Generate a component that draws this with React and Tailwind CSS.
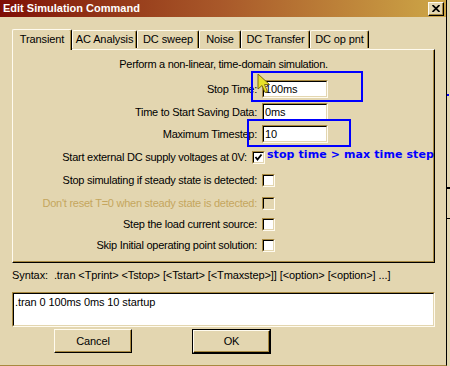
import React from "react";

const BG = "bg-[#e3d6b0]";

function Sunken({ className = "", inner = "bg-white", children }) {
  return (
    <div className={`border-t border-l border-t-[#a8893f] border-l-[#a8893f] border-b border-r border-b-[#fffbef] border-r-[#fffbef] ${className}`}>
      <div className={`w-full h-full border-t border-l border-t-black border-l-black border-b border-r border-b-[#e3d6b0] border-r-[#e3d6b0] ${inner}`}>
        {children}
      </div>
    </div>
  );
}

function Check({ checked, disabled }) {
  return (
    <Sunken className="w-[13px] h-[13px]" inner={disabled ? "bg-[#e3d6b0]" : "bg-white"}>
      {checked && (
        <svg width="9" height="9" viewBox="0 0 9 9" className="block">
          <path d="M1.5 4 L3.5 6.5 L7.5 1.5" stroke="black" strokeWidth="1.8" fill="none" />
        </svg>
      )}
    </Sunken>
  );
}

function Row({ label, className, children, disabled }) {
  return (
    <div className={`flex items-center ${className}`}>
      <div className={`w-[244px] text-right whitespace-nowrap leading-[13px] tracking-[-0.25px] ${disabled ? "text-[#c5a65e]" : "text-black"}`}>{label}</div>
      <div className="ml-[5px] flex items-center">{children}</div>
    </div>
  );
}

function Field({ value }) {
  return (
    <Sunken className="w-[66px] h-[18px]">
      <div className="pl-[1px] leading-[14px] text-[11px] text-black">{value}</div>
    </Sunken>
  );
}

function Tab({ label, className, selected }) {
  return (
    <div
      className={`flex items-center justify-center border-l border-t border-l-[#fffbef] border-t-[#fffbef] border-r border-r-black shadow-[inset_-1px_0_0_#a8893f] rounded-tl-[2px] rounded-tr-[2px] ${BG} ${selected ? "h-[21px] pb-[2px]" : "h-[18px] mb-[2px]"} ${className}`}
    >
      {label}
    </div>
  );
}

function Btn({ label, className }) {
  return (
    <div className={`flex items-center justify-center border-t border-l border-t-[#fffbef] border-l-[#fffbef] border-b border-r border-b-black border-r-black shadow-[inset_-1px_-1px_0_#a8893f] ${BG} ${className}`}>
      {label}
    </div>
  );
}

export default function App() {
  return (
    <div className={`w-[450px] h-[366px] flex overflow-hidden ${BG} font-['Liberation_Sans',Arial,sans-serif] text-[11px] tracking-[-0.1px] text-black`}>
      <div className="relative w-[447px] h-[366px] flex flex-col border-r border-r-black border-b border-b-[#a8893f]">
        {/* Title bar */}
        <div className="h-[17px] flex items-center justify-between bg-linear-to-r from-[#7e0c06] via-[#a9592a] to-[#cda747]">
          <span className="ml-[3px] text-white font-bold text-[11px] tracking-normal leading-[13px]">Edit Simulation Command</span>
          <div className={`mr-[2px] w-[16px] h-[14px] flex items-center justify-center border-t border-l border-t-[#fffbef] border-l-[#fffbef] border-b border-r border-b-black border-r-black shadow-[inset_-1px_-1px_0_#a8893f] ${BG}`}>
            <svg width="8" height="7" viewBox="0 0 8 7" className="block">
              <path d="M0.5 0 L7.5 7 M7.5 0 L0.5 7" stroke="black" strokeWidth="1.7" />
            </svg>
          </div>
        </div>

        {/* Tabs */}
        <div className="mt-[12px] h-[21px] flex items-end pl-[12px] relative z-10">
          <Tab label="Transient" selected className="w-[60px]" />
          <Tab label="AC Analysis" className="w-[65px]" />
          <Tab label="DC sweep" className="w-[62px]" />
          <Tab label="Noise" className="w-[42px]" />
          <Tab label="DC Transfer" className="w-[69px]" />
          <Tab label="DC op pnt" className="w-[59px]" />
        </div>

        {/* Panel */}
        <div className="-mt-[1px] ml-[12px] w-[423px] h-[214px] flex flex-col border-l border-t border-l-[#fffbef] border-t-[#fffbef] border-r border-b border-r-black border-b-black shadow-[inset_-1px_-1px_0_#a8893f]">
          <div className="mt-[7px] leading-[14px] text-center tracking-[-0.3px]">Perform a non-linear, time-domain simulation.</div>
          <Row label="Stop Time:" className="mt-[9px] h-[18px]"><Field value="100ms" /></Row>
          <Row label="Time to Start Saving Data:" className="mt-[5px] h-[18px]"><Field value="0ms" /></Row>
          <Row label="Maximum Timestep:" className="mt-[4px] h-[18px]"><Field value="10" /></Row>
          <Row label="Start external DC supply voltages at 0V:" className="mt-[8px] h-[13px]">
            <Check checked />
            <span className="ml-[2px] self-start -mt-[3px] whitespace-nowrap font-['DejaVu_Sans',Verdana,sans-serif] font-bold text-[11px] tracking-[0.1px] leading-[13px] text-[#0000ff]">stop time &gt; max time step</span>
          </Row>
          <Row label="Stop simulating if steady state is detected:" className="mt-[10px] h-[13px]"><Check /></Row>
          <Row label="Don't reset T=0 when steady state is detected:" disabled className="mt-[10px] h-[13px]"><Check disabled /></Row>
          <Row label="Step the load current source:" className="mt-[8px] h-[13px]"><Check /></Row>
          <Row label="Skip Initial operating point solution:" className="mt-[8px] h-[13px]"><Check /></Row>
        </div>

        <div className="mt-[5px] ml-[12px] leading-[14px] whitespace-pre">Syntax:  .tran &lt;Tprint&gt; &lt;Tstop&gt; [&lt;Tstart&gt; [&lt;Tmaxstep&gt;]] [&lt;option&gt; [&lt;option&gt;] ...]</div>

        <Sunken className="mt-[10px] ml-[12px] w-[423px] h-[35px]">
          <div className="pl-[1px] leading-[14px] pt-[1px]">.tran 0 100ms 0ms 10 startup</div>
        </Sunken>

        <div className="mt-[2px] flex items-start">
          <Btn label="Cancel" className="ml-[54px] w-[78px] h-[24px]" />
          <div className="ml-[60px] w-[79px] h-[25px] border border-black flex">
            <Btn label="OK" className="w-full h-full" />
          </div>
        </div>

        {/* Annotations overlay */}
        <div className="absolute left-[251px] top-[71px] w-[112px] h-[31px] border-2 border-[#0000ff]" />
        <div className="absolute left-[247px] top-[119px] w-[104px] h-[28px] border-2 border-[#0000ff]" />
        <svg className="absolute left-[257px] top-[73px]" width="14" height="21" viewBox="0 0 14 21">
          <polygon points="1,1 1,16 5,12.5 8,19.5 10.5,18.5 7.5,11.5 12.5,11.5" fill="#e8e028" stroke="#7a6a10" strokeWidth="1" />
        </svg>
      </div>
      <div className="flex-1 flex flex-col">
        <div className="mt-[94px] w-[2px] h-[2px] bg-[#0000ff]" />
        <div className="mt-[91px] w-full h-[2px] bg-black" />
        <div className="mt-[29px] w-full h-px bg-black" />
      </div>
    </div>
  );
}
